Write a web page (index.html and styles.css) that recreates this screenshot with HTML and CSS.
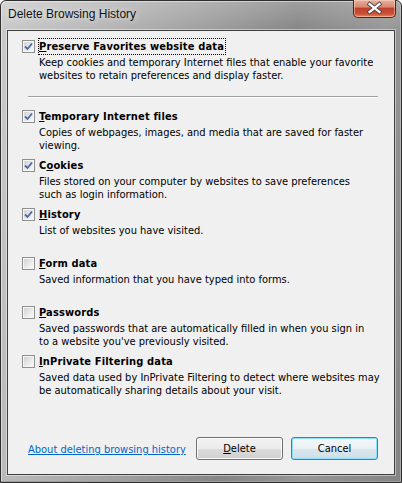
FILE: index.html
```html
<!DOCTYPE html>
<html>
<head>
<meta charset="utf-8">
<link rel="stylesheet" href="styles.css">
</head>
<body>
<div class="window">
  <div class="titlebar">
    <span class="title">Delete Browsing History</span>
    <div class="close">
      <svg width="42" height="17" viewBox="0 0 42 17">
        <path d="M16 4 L26 12 M26 4 L16 12" stroke="#4a4a4a" stroke-width="4.2" stroke-linecap="square"/>
        <path d="M16 4 L26 12 M26 4 L16 12" stroke="#ffffff" stroke-width="2.4" stroke-linecap="square"/>
      </svg>
    </div>
  </div>
  <div class="content">
    <div class="item">
      <span class="cb"><svg width="11" height="11" viewBox="0 0 11 11"><path d="M2 5.5 L4.5 8 L9 2.5" fill="none" stroke="#4868a8" stroke-width="1.8"/></svg></span>
      <div class="text">
        <div class="label"><span class="focus"><u>P</u>reserve Favorites website data</span></div>
        <div class="desc">Keep cookies and temporary Internet files that enable your favorite<br>websites to retain preferences and display faster.</div>
      </div>
    </div>
    <div class="sep"></div>
    <div class="item">
      <span class="cb"><svg width="11" height="11" viewBox="0 0 11 11"><path d="M2 5.5 L4.5 8 L9 2.5" fill="none" stroke="#4868a8" stroke-width="1.8"/></svg></span>
      <div class="text">
        <div class="label"><u>T</u>emporary Internet files</div>
        <div class="desc">Copies of webpages, images, and media that are saved for faster<br>viewing.</div>
      </div>
    </div>
    <div class="item">
      <span class="cb"><svg width="11" height="11" viewBox="0 0 11 11"><path d="M2 5.5 L4.5 8 L9 2.5" fill="none" stroke="#4868a8" stroke-width="1.8"/></svg></span>
      <div class="text">
        <div class="label">C<u>o</u>okies</div>
        <div class="desc">Files stored on your computer by websites to save preferences<br>such as login information.</div>
      </div>
    </div>
    <div class="item">
      <span class="cb"><svg width="11" height="11" viewBox="0 0 11 11"><path d="M2 5.5 L4.5 8 L9 2.5" fill="none" stroke="#4868a8" stroke-width="1.8"/></svg></span>
      <div class="text">
        <div class="label"><u>H</u>istory</div>
        <div class="desc">List of websites you have visited.</div>
      </div>
    </div>
    <div class="item">
      <span class="cb"></span>
      <div class="text">
        <div class="label"><u>F</u>orm data</div>
        <div class="desc">Saved information that you have typed into forms.</div>
      </div>
    </div>
    <div class="item">
      <span class="cb"></span>
      <div class="text">
        <div class="label"><u>P</u>asswords</div>
        <div class="desc">Saved passwords that are automatically filled in when you sign in<br>to a website you've previously visited.</div>
      </div>
    </div>
    <div class="item">
      <span class="cb"></span>
      <div class="text">
        <div class="label"><u>I</u>nPrivate Filtering data</div>
        <div class="desc">Saved data used by InPrivate Filtering to detect where websites may<br>be automatically sharing details about your visit.</div>
      </div>
    </div>
    <div class="footer">
      <a class="link" href="#">About deleting browsing history</a>
      <div class="buttons">
        <button class="btn"><u>D</u>elete</button>
        <button class="btn default">Cancel</button>
      </div>
    </div>
  </div>
</div>
</body>
</html>
```
FILE: styles.css
```css
html, body {
  margin: 0;
  padding: 0;
}
body {
  width: 402px;
  height: 483px;
  overflow: hidden;
  font-family: "DejaVu Sans Condensed", "DejaVu Sans", sans-serif;
  font-size: 11px;
  color: #000;
}
.window {
  box-sizing: border-box;
  width: 402px;
  height: 483px;
  border: 1px solid #2e2e2e;
  border-radius: 6px 6px 0 0;
  background:
    linear-gradient(to bottom, rgba(255,255,255,0.2), rgba(255,255,255,0) 30px),
    linear-gradient(100deg, #cacaca 0%, #b6b6b6 22%, #9c9c9c 45%, #868686 62%, #979797 80%, #848484 100%);
  box-shadow: inset 0 -1px 0 #62b6c4, inset 1px 1px 0 rgba(255,255,255,0.45), inset -1px 0 0 rgba(255,255,255,0.3);
  padding: 0 6px 7px 6px;
  display: flex;
  flex-direction: column;
}
.titlebar {
  height: 29px;
  display: flex;
  align-items: flex-start;
}
.title {
  font-family: "Liberation Sans", sans-serif;
  font-size: 12px;
  color: #111;
  margin-top: 6px;
  margin-left: 1px;
  text-shadow: 0 0 6px rgba(255,255,255,0.9);
}
.close {
  margin-left: auto;
  margin-right: -1px;
  margin-top: -1px;
  width: 43px;
  height: 18px;
  box-sizing: border-box;
  border: 1px solid #5a2018;
  border-top: none;
  border-radius: 0 0 5px 5px;
  background: linear-gradient(to bottom, #e8b0a0 0%, #d88a74 40%, #c2402a 50%, #cc4e34 80%, #e08860 100%);
  box-shadow: inset 0 0 0 1px rgba(255,220,200,0.5);
  display: flex;
}
.close svg {
  display: block;
}
.content {
  flex: 1;
  box-sizing: border-box;
  border: 1px solid #3f3f3f;
  background: #f0f0f0;
  box-shadow: 0 0 0 1px rgba(255,255,255,0.45);
  padding: 7px 16px 14px 14px;
  display: flex;
  flex-direction: column;
}
.item {
  display: flex;
  gap: 4px;
  margin-bottom: 5px;
}
.cb {
  flex: none;
  box-sizing: border-box;
  width: 13px;
  height: 13px;
  margin-top: 2px;
  border: 1px solid #8e8f8f;
  background: linear-gradient(135deg, #cfcfcf 0%, #e9e9e9 55%, #fafafa 100%);
  box-shadow: inset 0 0 0 1px #f6f6f6;
}
.cb svg {
  display: block;
}
.text {
  flex: 1;
}
.label {
  height: 18px;
  line-height: 17px;
  font-weight: bold;
  letter-spacing: 0.15px;
}
.focus {
  outline: 1px dotted #000;
  outline-offset: 0;
  padding: 1px 1px 1px 0;
}
.desc {
  line-height: 13px;
  min-height: 26px;
  white-space: nowrap;
}
.sep {
  height: 1px;
  background: #a0a0a0;
  border-bottom: 1px solid #fff;
  margin: 9px 0 10px 6px;
}
.footer {
  margin-top: auto;
  display: flex;
  align-items: center;
  padding-left: 6px;
}
.link {
  color: #0066cc;
  text-decoration: underline;
  margin-top: 2px;
}
.buttons {
  margin-left: auto;
  display: flex;
  gap: 8px;
}
.btn {
  box-sizing: border-box;
  width: 87px;
  height: 23px;
  border: 1px solid #707070;
  border-radius: 3px;
  background: linear-gradient(to bottom, #f2f2f2 0%, #ebebeb 50%, #dddddd 50%, #cfcfcf 100%);
  box-shadow: inset 0 0 0 1px #fbfbfb;
  font-family: inherit;
  font-size: 11px;
  color: #000;
  padding: 0;
}
.btn.default {
  border-color: #3c7fb1;
  background: linear-gradient(to bottom, #f4f8fa 0%, #eaf1f5 50%, #dbe6ec 50%, #cfdfe8 100%);
  box-shadow: inset 0 0 0 1px #8ee0fa;
}
```
